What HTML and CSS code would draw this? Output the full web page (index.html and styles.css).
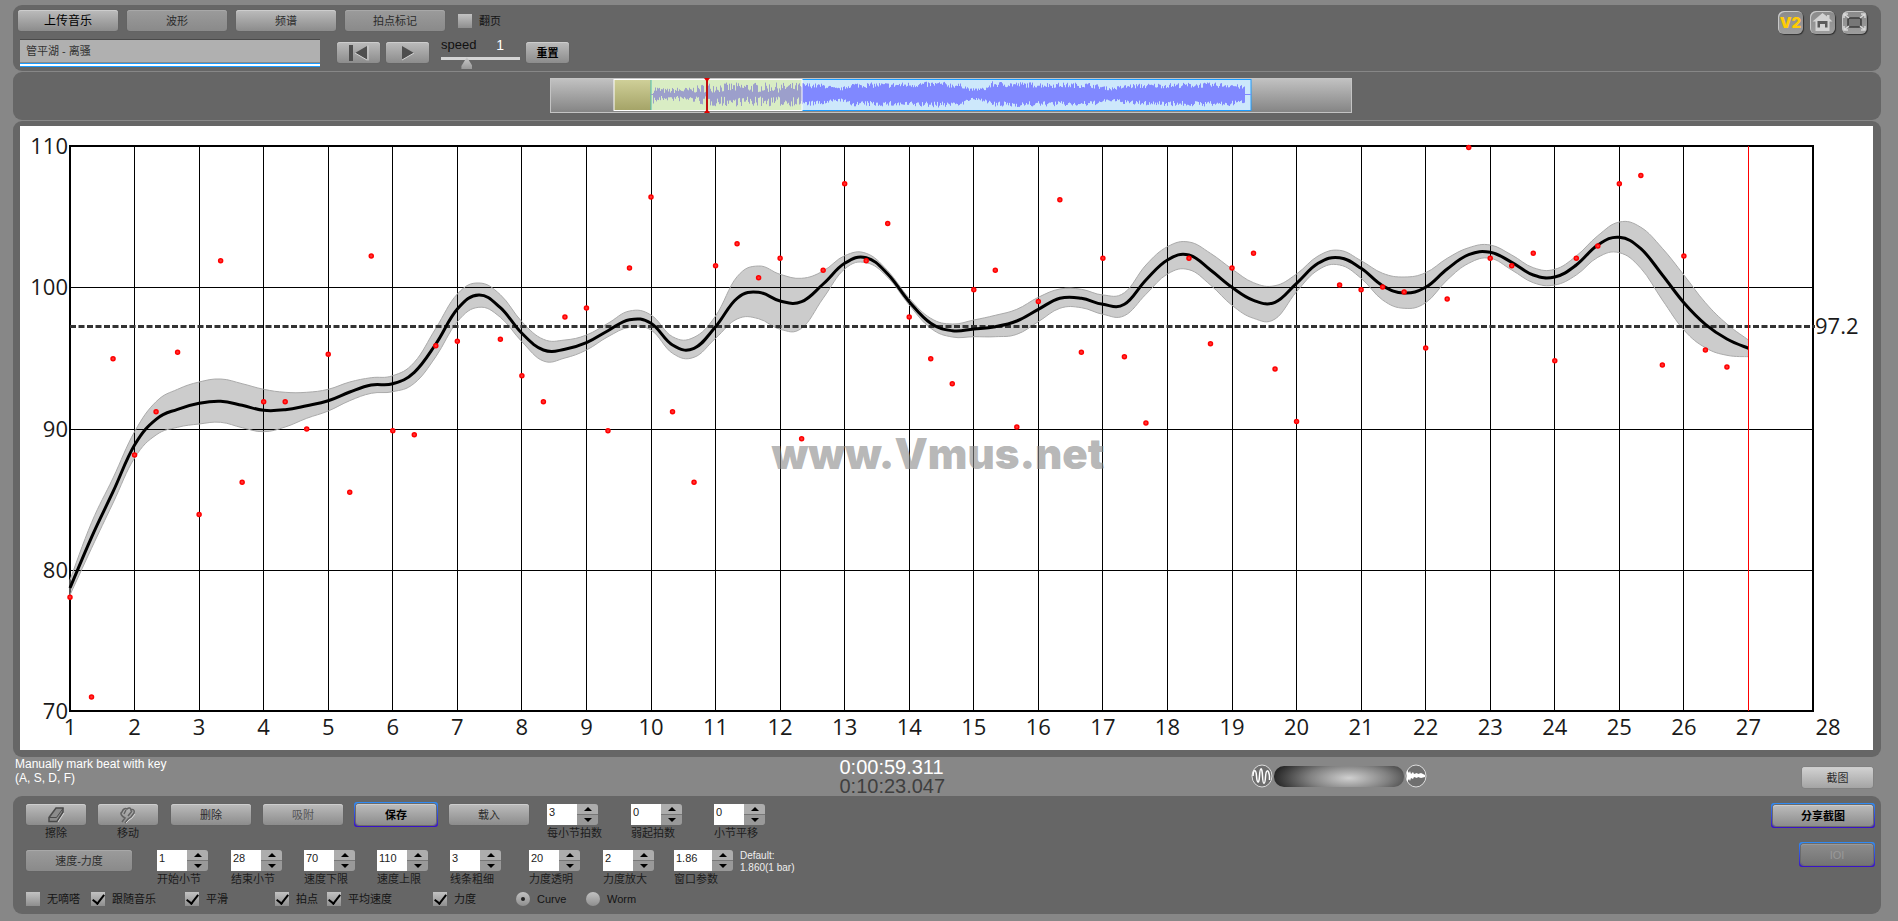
FILE: index.html
```html
<!DOCTYPE html>
<html lang="zh-CN">
<head>
<meta charset="utf-8">
<title>Vmus.net</title>
<link rel="stylesheet" href="styles.css">
</head>
<body>
<header class="panel topbar">
  <div class="tools">
    <div class="tools-row">
      <button class="btn btn-tab strong" type="button">上传音乐</button>
      <button class="btn btn-tab flat" type="button">波形</button>
      <button class="btn btn-tab" type="button">频谱</button>
      <button class="btn btn-tab flat" type="button">拍点标记</button>
      <label class="check"><input type="checkbox">翻页</label>
    </div>
    <div class="tools-row second">
      <input class="title-field" type="text" aria-label="曲名" value="管平湖 - 离骚">
      <div class="transport">
        <button class="btn btn-play" type="button" aria-label="回到开头">
          <svg width="24" height="18" viewBox="0 0 24 18"><path d="M4 1v16M21 1.500v15" class="ic-light"/><path d="M2 1h4v16H2zM20 2v14L8 9z" class="ic-fill"/><path d="M8 9l12 7" class="ic-light"/></svg>
        </button>
        <button class="btn btn-play" type="button" aria-label="播放">
          <svg width="24" height="18" viewBox="0 0 24 18"><path d="M6 2v14l12-7z" class="ic-fill"/><path d="M6 16l12-7" class="ic-light"/></svg>
        </button>
      </div>
      <div class="speed">
        <label class="speed-head" for="speed"><span>speed</span><output class="speed-value">1</output></label>
        <input id="speed" class="speed-range" type="range" min="0" max="3" step="0.1" value="0.9">
      </div>
      <button class="btn btn-play heavy" type="button">重置</button>
    </div>
  </div>
  <nav class="links">
    <a class="tile v2" href="#">V2</a>
    <a class="tile" href="#" aria-label="首页">
      <svg width="25" height="22" viewBox="0 0 25 22"><path d="M12.500 2L2.500 10.500h3V20h14v-9.500h3l-3-3V4h-2.500v1.500z" fill="#d2d2d2"/><path d="M7.500 16.500V10h10v6.500h-2.500V13h-5v3.500z" fill="#5a5a5a"/></svg>
    </a>
    <a class="tile" href="#" aria-label="全屏">
      <svg width="25" height="22" viewBox="0 0 25 22"><rect x="6" y="7" width="13" height="9" rx="2" fill="#777" stroke="#3c3c3c" stroke-width="1.500"/><path d="M6 3H2v4M2 3l5 4M19 3h4v4M23 3l-5 4M2 15v4h4M2 19l5-4M23 15v4h-4M23 19l-5-4" fill="none" stroke="#d8d8d8" stroke-width="1.500"/></svg>
    </a>
  </nav>
</header>

<section class="panel overview">
  <svg id="wave" class="wave" viewBox="0 0 802 36" width="802" height="36" role="img" aria-label="音频概览">
    <defs>
      <linearGradient id="grey" x1="0" y1="0" x2="0" y2="1"><stop offset="0" stop-color="#c2c2c2"/><stop offset="1" stop-color="#848484"/></linearGradient>
      <linearGradient id="tan" x1="0" y1="0" x2="0" y2="1"><stop offset="0" stop-color="#cfcf98"/><stop offset="1" stop-color="#a5a468"/></linearGradient>
    </defs>
    <rect x="0.500" y="0.500" width="801" height="34" fill="url(#grey)" stroke="#c4c4c4"/>
    <rect x="101" y="1.500" width="600" height="31" fill="#cde8fb" stroke="#1c9cff"/>
    <rect x="64" y="2" width="188" height="30" fill="#d9edc4"/>
    <rect x="64" y="2" width="37" height="30" fill="url(#tan)"/>
    <path d="M101 2v30" stroke="#4fc0b0"/>
    <path id="wave-played" stroke="#9c9fcb"/>
    <path id="wave-rest" stroke="#8088ff"/>
    <rect x="64" y="1.500" width="188" height="31" fill="none" stroke="#fff"/>
    <path d="M157 1v33" stroke="#c01010" stroke-width="2"/>
    <path d="M154 0h6l-3 4zM154 35h6l-3-4z" fill="#e00000"/>
  </svg>
</section>

<main class="panel plot-panel">
  <svg id="plot" class="plot" viewBox="0 0 1853 624" role="img" aria-label="速度曲线">
    <g id="grid"></g>
    <text class="watermark" x="918" y="343">www.Vmus.net</text>
    <path id="band" class="band"/>
    <path class="mean" d="M50 200.500H1795"/>
    <path id="curve" class="curve"/>
    <path class="cursor" d="M1728.500 20v565"/>
    <g id="beats"></g>
    <g id="labels"></g>
  </svg>
</main>

<section class="strip">
  <p class="hint">Manually mark beat with key<br>(A, S, D, F)</p>
  <p class="times"><span class="now">0:00:59.311</span><span class="total">0:10:23.047</span></p>
  <div class="zoomer">
    <svg width="22" height="24" viewBox="0 0 22 24"><ellipse cx="11" cy="12" rx="10" ry="11" class="ring"/><path d="M2 12C2.500 5 5 5 5.500 12S8 21 8.500 12 11 2 11.500 12s2.500 9 3 1 3-8 4-1v4" fill="none" stroke="#fff" stroke-width="1.500"/></svg>
    <div class="dial"></div>
    <svg width="22" height="24" viewBox="0 0 22 24"><ellipse cx="11" cy="12" rx="10" ry="11" class="ring"/><path d="M2 6l2 3 1-2 1 3 2-2 1 2 3-1 1 1 3-1 4 2v2l-4 1-3-1-1 1-3-1-1 2-2-1-1 3-1-2-2 3z" fill="#fff"/></svg>
  </div>
  <button class="btn btn-shot" type="button">截图</button>
</section>

<footer class="panel controls">
  <div class="rows">
    <div class="row row-a">
      <div class="stack w60"><button class="btn" type="button" aria-labelledby="t1"><svg width="20" height="18" viewBox="0 0 20 18"><path d="M3 11.500L10 2h7v4l-6 9.500H3z" fill="#8b8b8b" stroke="#4a4a4a" stroke-width="1.500"/><path d="M3 11.500h7.500L17 2.500" fill="none" stroke="#4a4a4a"/><path d="M12 16l6-9" class="ic-light"/></svg></button><span id="t1">擦除</span></div>
      <div class="stack w60"><button class="btn" type="button" aria-labelledby="t2"><svg width="20" height="18" viewBox="0 0 20 18"><path d="M4 16l3-4c-4-2-5-5-3-6 1-3 3-4 5-3 2-2 4-1 4 1 2-1 4 0 3 3l-3 4-3 2-3 4M6 8l2-4M10 10l4-5" fill="none" stroke="#626262" stroke-width="1.500"/><path d="M8 17l3-3 3-2 3-4" class="ic-light"/></svg></button><span id="t2">移动</span></div>
      <button class="btn w80" type="button">删除</button>
      <button class="btn w80 dim" type="button">吸附</button>
      <span class="glow w80"><button class="btn heavy" type="button">保存</button></span>
      <button class="btn w80" type="button">载入</button>
      <div class="field"><div class="spin"><input id="f1" type="text" value="3"><span class="arrows"><button type="button" aria-label="+"></button><button type="button" aria-label="−"></button></span></div><label for="f1">每小节拍数</label></div>
      <div class="field"><div class="spin"><input id="f2" type="text" value="0"><span class="arrows"><button type="button" aria-label="+"></button><button type="button" aria-label="−"></button></span></div><label for="f2">弱起拍数</label></div>
      <div class="field"><div class="spin"><input id="f3" type="text" value="0"><span class="arrows"><button type="button" aria-label="+"></button><button type="button" aria-label="−"></button></span></div><label for="f3">小节平移</label></div>
    </div>
    <div class="row row-b">
      <button class="btn flat wide" type="button">速度-力度</button>
      <div class="field"><div class="spin"><input id="g1" type="text" value="1"><span class="arrows"><button type="button" aria-label="+"></button><button type="button" aria-label="−"></button></span></div><label for="g1">开始小节</label></div>
      <div class="field"><div class="spin"><input id="g2" type="text" value="28"><span class="arrows"><button type="button" aria-label="+"></button><button type="button" aria-label="−"></button></span></div><label for="g2">结束小节</label></div>
      <div class="field"><div class="spin"><input id="g3" type="text" value="70"><span class="arrows"><button type="button" aria-label="+"></button><button type="button" aria-label="−"></button></span></div><label for="g3">速度下限</label></div>
      <div class="field"><div class="spin"><input id="g4" type="text" value="110"><span class="arrows"><button type="button" aria-label="+"></button><button type="button" aria-label="−"></button></span></div><label for="g4">速度上限</label></div>
      <div class="field"><div class="spin"><input id="g5" type="text" value="3"><span class="arrows"><button type="button" aria-label="+"></button><button type="button" aria-label="−"></button></span></div><label for="g5">线条粗细</label></div>
      <div class="field"><div class="spin"><input id="g6" type="text" value="20"><span class="arrows"><button type="button" aria-label="+"></button><button type="button" aria-label="−"></button></span></div><label for="g6">力度透明</label></div>
      <div class="field"><div class="spin"><input id="g7" type="text" value="2"><span class="arrows"><button type="button" aria-label="+"></button><button type="button" aria-label="−"></button></span></div><label for="g7">力度放大</label></div>
      <div class="field roomy"><div class="spin"><input id="g8" type="text" value="1.86"><span class="arrows"><button type="button" aria-label="+"></button><button type="button" aria-label="−"></button></span></div><label for="g8">窗口参数</label></div>
      <p class="default">Default:<br>1.860(1 bar)</p>
    </div>
    <div class="row row-c">
      <label class="check"><input type="checkbox">无嘀嗒</label>
      <label class="check"><input type="checkbox" checked>跟随音乐</label>
      <label class="check"><input type="checkbox" checked>平滑</label>
      <label class="check"><input type="checkbox" checked>拍点</label>
      <label class="check"><input type="checkbox" checked>平均速度</label>
      <label class="check"><input type="checkbox" checked>力度</label>
      <label class="check"><input type="radio" name="view" checked>Curve</label>
      <label class="check"><input type="radio" name="view">Worm</label>
    </div>
  </div>
  <div class="share">
    <span class="glow share-wide"><button class="btn heavy" type="button">分享截图</button></span>
    <span class="glow share-small"><button class="btn off" type="button" disabled>IOI</button></span>
  </div>
</footer>
<script src="chart.js"></script>
</body>
</html>
```
FILE: chart.js
```js
const NS = "http://www.w3.org/2000/svg";
const LEFT = 50, RIGHT = 1793, TOP = 20, BOTTOM = 585;
const STEP = (RIGHT - LEFT) / 27;
const xOf = bar => LEFT + (bar - 1) * STEP;
const yOf = tempo => TOP + (110 - tempo) * (BOTTOM - TOP) / 40;

function add(parent, name, attrs, text) {
  const el = document.createElementNS(NS, name);
  for (const key in attrs) el.setAttribute(key, attrs[key]);
  if (text !== undefined) el.textContent = text;
  parent.appendChild(el);
}

// Grid and axis labels
const grid = document.getElementById("grid");
const labels = document.getElementById("labels");
for (let bar = 2; bar < 27; bar++) {
  const x = Math.floor(xOf(bar)) + 0.5;
  add(grid, "path", { d: `M${x} ${TOP}V${BOTTOM}`, class: "line" });
}
for (let bar = 1; bar <= 28; bar++) {
  const x = bar === 28 ? xOf(bar) + 15 : xOf(bar);
  add(labels, "text", { x, y: 609, class: "x-label" }, bar);
}
for (let t = 70; t <= 110; t += 10) {
  if (t > 70 && t < 110) add(grid, "path", { d: `M${LEFT} ${Math.round(yOf(t)) + 0.5}H${RIGHT}`, class: "line" });
  add(labels, "text", { x: 48, y: yOf(t) + 8, class: "y-label" }, t);
}
add(labels, "text", { x: 1795, y: 208, class: "mean-label" }, "97.2");
add(grid, "rect", { x: LEFT, y: TOP, width: RIGHT - LEFT, height: BOTTOM - TOP, class: "frame" });

// Tempo of each beat, three beats to a bar; null = outside the range
const beats = [
  78.05, 71, 94.94, 88.12, 91.19, 95.39, 83.92, 101.88, 86.2, 91.9, 91.9, 89.96,
  95.25, 85.48, 102.21, 89.84, 89.56, 95.86, 96.17, null, 96.31, 93.74, 91.9, 97.89,
  98.53, 89.84, 101.36, 106.39, 91.19, 86.2, 101.53, 103.08, 100.68, 102.05, 89.28, 101.2,
  107.33, 101.88, 104.52, 97.89, 94.94, 93.17, 99.83, 101.2, 90.1, 99, 106.2, 95.39,
  102.05, 95.08, 90.39, null, 102.05, 96, 101.36, 102.4, 94.21, 90.5, null, 100.16,
  99.83, 100.02, 99.66, 95.7, 99.17, 109.9, 102.05, 101.53, 102.4, 94.8, 102.05, 102.92,
  107.33, 107.92, 94.49, 102.21, 95.56, 94.35
];
const dots = document.getElementById("beats");
beats.forEach((tempo, i) => {
  if (tempo !== null) add(dots, "circle", { cx: xOf(1 + i / 3), cy: yOf(tempo), r: 2 });
});

// Smoothed curve, one sample per beat: centre, upper edge, lower edge
const samples = [
  [588, 580, 595], [537.3, 522.7, 548.3], [491.7, 478, 503], [445, 431.7, 458],
  [419.3, 401.7, 435], [409.3, 389.3, 427.3], [403.3, 382, 424], [401.3, 379, 422.3],
  [405.3, 383.7, 427.7], [410.3, 389.3, 431.7], [409.7, 392.3, 427], [405.7, 392.3, 418.3],
  [400.7, 389.3, 411], [392, 382, 400.7], [385, 377.7, 393.3], [383.7, 375.7, 391.7],
  [372.3, 362.3, 383.3], [344, 328.3, 356.7], [309, 294, 321.7], [295, 283, 307.3],
  [307.7, 294.7, 317.3], [333.3, 321.7, 341.7], [350, 339.3, 361], [349.3, 340, 358],
  [342.7, 335, 350], [330.7, 323.3, 336.7], [319.7, 311, 327.3], [323.3, 315, 330],
  [345, 336.7, 353.3], [348.3, 337.3, 357.3], [326.7, 316, 338.3], [298.3, 276.7, 319],
  [292.3, 266, 318.7], [301, 274.3, 329.3], [301.7, 278.3, 328.3], [284, 271, 298.3],
  [263.3, 255.7, 269], [257.7, 253.3, 262.7], [274, 270.7, 277.3], [301.7, 298.3, 305],
  [323.3, 318.3, 328.3], [330.7, 324, 337], [329, 320, 336.7], [326.7, 315.3, 336.7],
  [321, 309.3, 334.3], [309.3, 297.3, 321.7], [298.3, 289, 308.3], [298.3, 289.3, 307.7],
  [304.3, 295, 314.3], [304.3, 292.7, 315.7], [280, 265, 294.3], [260, 246.7, 274],
  [255, 242, 269.7], [270, 253.3, 285], [287.3, 269, 305.3], [300.3, 282.7, 318.3],
  [302.3, 285.7, 319], [283.3, 274, 291.7], [263.3, 256, 270], [257.7, 250.3, 265],
  [268.3, 260.7, 278.3], [285.7, 273.3, 300], [293, 277, 308.3], [287.3, 272.7, 302.7],
  [269, 258.3, 280], [254.7, 247.7, 263.3], [252.3, 245, 258.3], [262.3, 255, 270],
  [275, 267.7, 282.7], [277, 269.3, 285], [265, 256, 275], [245, 235.7, 257.3],
  [237.3, 222, 252.7], [248.7, 227.3, 268.3], [275, 248.3, 300], [302.7, 275, 330],
  [324.3, 302.7, 347.7], [339, 324, 355.3], [348.3, 340, 356.7]
];
const SAMPLE_TOP = 126;

function points(column) {
  return samples.map((s, i) => [xOf(1 + i / 3), s[column] - SAMPLE_TOP]);
}
function smooth(pts) {
  let d = "";
  for (let i = 0; i < pts.length - 1; i++) {
    const a = pts[Math.max(i - 1, 0)], b = pts[i], c = pts[i + 1], e = pts[Math.min(i + 2, pts.length - 1)];
    d += `C${b[0] + (c[0] - a[0]) / 5} ${b[1] + (c[1] - a[1]) / 5} ${c[0] - (e[0] - b[0]) / 5} ${c[1] - (e[1] - b[1]) / 5} ${c[0]} ${c[1]}`;
  }
  return d;
}
const mid = points(0), high = points(1), low = points(2).reverse();
document.getElementById("curve").setAttribute("d", `M${mid[0]}` + smooth(mid));
document.getElementById("band").setAttribute("d", `M${high[0]}` + smooth(high) + `L${low[0]}` + smooth(low) + "Z");

// Overview waveform: loudness envelope as [x, half height]
const envelope = [
  [103, 8], [115, 5], [125, 6], [140, 6], [157, 10], [180, 10], [210, 10], [252, 10],
  [275, 9], [285, 6], [292, 6], [300, 10], [340, 10], [390, 11], [413, 9], [420, 5], [435, 6],
  [442, 11], [500, 10], [540, 10], [560, 6], [580, 9], [640, 10], [680, 10], [695, 7]
];
const MIDDLE = 16.5;
let seed = 7;
const random = () => (seed = (seed * 16807) % 2147483647) / 2147483647;
function halfAt(x) {
  const i = Math.max(1, envelope.findIndex(p => p[0] >= x));
  const [x0, h0] = envelope[i - 1], [x1, h1] = envelope[i];
  return h0 + (h1 - h0) * (x - x0) / (x1 - x0);
}
let played = `M101 ${MIDDLE}h151`, rest = `M252 ${MIDDLE}h449`;
for (let x = 103; x < 695; x++) {
  const floor = x < 252 ? 0.2 : 0.65;
  const up = halfAt(x) * (floor + (1.2 - floor) * random());
  const down = halfAt(x) * (floor + (1.2 - floor) * random());
  const bar = `M${x + 0.5} ${(MIDDLE - up).toFixed(1)}V${(MIDDLE + down).toFixed(1)}`;
  if (x < 252) played += bar; else rest += bar;
}
document.getElementById("wave-played").setAttribute("d", played);
document.getElementById("wave-rest").setAttribute("d", rest);
```
FILE: styles.css
```css
* { box-sizing: border-box; }

body {
  margin: 0;
  padding: 5px 17px 7px 13px;
  min-height: 100vh;
  display: flex;
  flex-direction: column;
  gap: 1px;
  background: #878787;
  font: 11px/14px "Liberation Sans", "Noto Sans CJK SC", sans-serif;
  color: #1c1c1c;
}

p { margin: 0; }
button, input { font: inherit; color: inherit; margin: 0; }
svg { display: block; }

.panel { background: #666; border-radius: 9px; }

/* Buttons */
.btn {
  display: flex;
  align-items: center;
  justify-content: center;
  height: 21px;
  padding: 0;
  border: 0;
  border-radius: 3px;
  background: linear-gradient(#bcbcbc, #8c8c8c);
  box-shadow: inset 0 1px #cdcdcd, 0 0 1px #505050;
  color: #2c2c2c;
}
.btn.flat { background: linear-gradient(#9b9b9b, #8a8a8a); box-shadow: inset 0 1px #a8a8a8, 0 0 1px #505050; }
.btn.strong { font-size: 12px; color: #000; }
.btn.dim { color: #555; }
.btn.heavy { font-weight: 700; color: #000; }
.btn.off { background: linear-gradient(#8c8c8c, #747474); box-shadow: inset 0 1px #999; color: #999; }
.ic-fill { fill: #4e4e4e; }
.ic-light { fill: none; stroke: #d6d6d6; stroke-width: 1; }

.glow {
  display: flex;
  padding: 2px;
  margin: -2px;
  border-radius: 3px;
  background: linear-gradient(#2f8df5, #3a10c8);
}
.glow .btn { flex: 1; box-shadow: inset 0 1px #cdcdcd, 0 0 0 1px #6b6b6b; }
.glow .btn.off { box-shadow: inset 0 1px #999, 0 0 0 1px #6b6b6b; }

/* Top bar */
.topbar { display: flex; justify-content: space-between; padding: 5px 14px 3px 5px; }
.tools { display: flex; flex-direction: column; gap: 8px; }
.tools-row { display: flex; gap: 9px; align-items: center; }
.tools-row.second { gap: 6px; height: 29px; align-items: flex-start; padding-left: 2px; }
.btn-tab { width: 100px; }
.tools-row .check { margin-left: 4px; }
.title-field {
  width: 300px;
  height: 28px;
  padding: 0 6px 3px;
  border: 0;
  border-top: 1px solid #4a4a4a;
  border-bottom: 4px double #1c9cff;
  background: linear-gradient(#b0b0b0, #b0b0b0) padding-box, linear-gradient(#fff, #fff) border-box;
  box-shadow: inset 0 -1px #8a8a8a;
  color: #333;
}
.transport { display: flex; gap: 6px; margin-left: 11px; }
.btn-play { width: 43px; }
.transport, .tools-row.second > .btn { margin-top: 3px; }
.speed { width: 79px; margin: 0 0 0 6px; }
.speed-head { display: flex; justify-content: space-between; padding-right: 16px; font-size: 13px; line-height: 12px; color: #111; }
.speed-value { color: #fff; font-size: 14px; }
.speed-range { display: block; width: 79px; height: 15px; appearance: none; background: none; }
.speed-range::-webkit-slider-runnable-track { height: 3px; background: #d4d4d4; }
.speed-range::-webkit-slider-thumb {
  appearance: none;
  width: 11px;
  height: 12px;
  background: linear-gradient(#ccc, #989898);
  clip-path: polygon(50% 0, 100% 75%, 100% 100%, 0 100%, 0 75%);
}
.links { display: flex; gap: 7px; padding-top: 1px; }
.tile {
  width: 25px;
  height: 23px;
  border-radius: 6px;
  background: linear-gradient(#8a8a8a, #9d9d9d);
  box-shadow: inset 1px 1px #c8c8c8, 1px 1px 1px #333;
  text-decoration: none;
}
.v2 { font: 900 15px/23px Inter, sans-serif; color: #ffcb05; text-align: center; }

/* Checks and radios */
.check { display: flex; align-items: center; gap: 7px; white-space: nowrap; color: #141414; }
.check input { appearance: none; width: 14px; height: 14px; background: linear-gradient(#c2c2c2, #8e8e8e); display: grid; place-items: center; }
.check input[type="radio"] { border-radius: 50%; }
.check input[type="checkbox"]:checked::before {
  content: "";
  width: 5px;
  height: 10px;
  margin-bottom: 3px;
  border: solid #000;
  border-width: 0 2px 2px 0;
  transform: rotate(38deg);
}
.check input[type="radio"]:checked::before { content: ""; width: 4px; height: 4px; border-radius: 50%; background: #222; }

/* Overview */
.overview { display: flex; justify-content: center; padding: 6px 0 6px 8px; }

/* Plot */
.plot-panel { padding: 5px 8px 7px 7px; }
.plot { width: 100%; height: auto; background: #fff; }
.line { stroke: #000; stroke-width: 1; fill: none; }
.frame { stroke: #000; stroke-width: 2; fill: none; }
.band { fill: #000; fill-opacity: 0.2; stroke: #aaa; stroke-width: 1; }
.curve { fill: none; stroke: #000; stroke-width: 3; stroke-linejoin: round; }
.mean { stroke: #333; stroke-width: 3; stroke-dasharray: 6 2.5; fill: none; }
.cursor { stroke: #f00; fill: none; }
#beats circle { fill: #f33; stroke: #f00; stroke-width: 1.500; }
#labels text { font: 22px "Open Sans", sans-serif; fill: #1a1a1a; }
#labels .x-label { text-anchor: middle; }
#labels .y-label { text-anchor: end; }
.watermark { font: 900 42px Inter, sans-serif; text-anchor: middle; fill: #888; fill-opacity: 0.62; }

/* Strip */
.strip {
  display: grid;
  grid-template-columns: 824fr 411fr 551fr 71px;
  align-items: start;
  height: 36px;
  margin-bottom: 1px;
  padding: 0 8px 0 2px;
}
.hint { font-size: 12px; line-height: 14px; margin-top: -1px; color: #fff; }
.times { font-size: 20px; line-height: 19px; }
.times span { display: block; }
.now { color: #fff; }
.total { color: #3f3f3f; }
.zoomer { display: flex; align-items: center; gap: 1px; padding-top: 6px; }
.ring { fill: #6f6f6f; stroke: #ddd; }
.dial { width: 130px; height: 21px; border-radius: 10px; background: radial-gradient(ellipse 80px 26px at 75px 12px, #d0d0d0, #808080 50%, #1c1c1c); }
.btn-shot { margin-top: 9px; background: linear-gradient(#d2d2d2, #a4a4a4); }

/* Controls */
.controls { display: flex; justify-content: space-between; flex: 1; padding: 8px 8px 0 13px; }
.row { display: grid; align-items: start; justify-items: start; }
.row-a { grid-template-columns: 72px 73px 92px 93px 93px 98px 84px 83px auto; height: 46px; }
.row-b { grid-template-columns: 131px 74px 73px 73px 73px 79px 74px 71px 66px auto; height: 42px; }
.row-c { grid-template-columns: 65px 94px 90px 52px 106px 83px 70px auto; }
.stack { display: flex; flex-direction: column; text-align: center; gap: 1px; }
.w60 { width: 60px; }
.w80 { width: 80px; }
.glow.w80 { width: 84px; }
.wide { width: 106px; }
.field { display: flex; flex-direction: column; gap: 1px; white-space: nowrap; }
.spin { display: flex; }
.spin input { width: 30px; height: 21px; padding: 0 2px 5px; border: 0; background: #fff; color: #222; }
.roomy .spin input { width: 38px; }
.arrows { width: 21px; height: 21px; display: flex; flex-direction: column; gap: 1px; background: #777; border-radius: 0 3px 3px 0; overflow: hidden; }
.arrows button { flex: 1; padding: 0; border: 0; background: #adadad; display: grid; place-items: center; }
.arrows button:last-child { background: #999; }
.arrows button::before { content: ""; border: solid transparent; border-width: 0 4px 4px; border-bottom-color: #000; }
.arrows button:last-child::before { border-width: 4px 4px 0; border-top-color: #000; }
.default { font-size: 10px; line-height: 12px; color: #eee; white-space: nowrap; }
.share { display: flex; flex-direction: column; align-items: flex-end; gap: 18px; padding-top: 1px; }
.share-wide { width: 104px; }
.share-small { width: 76px; }
```
